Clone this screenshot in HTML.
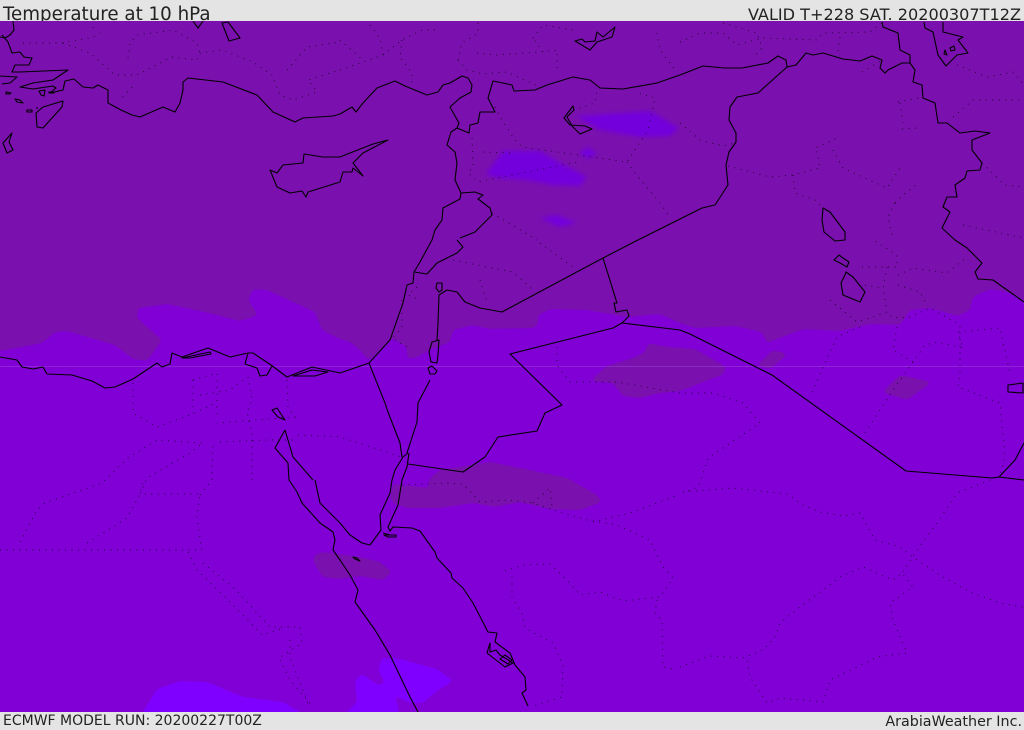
<!DOCTYPE html>
<html><head><meta charset="utf-8"><title>Temperature at 10 hPa</title>
<style>
html,body{margin:0;padding:0;width:1024px;height:729px;overflow:hidden;background:#e4e4e4}
.t{position:absolute;font-family:"DejaVu Sans","Liberation Sans",sans-serif;color:#222;white-space:nowrap;line-height:1}
#map{position:absolute;left:0;top:21px;width:1024px;height:691px;display:block}
</style></head><body>
<div class="t" style="left:3px;top:6px;font-size:18.25px">Temperature at 10 hPa</div>
<div class="t" style="right:3px;top:7px;font-size:16.1px">VALID T+228 SAT. 20200307T12Z</div>
<div class="t" style="left:3px;top:714px;font-size:14px">ECMWF MODEL RUN: 20200227T00Z</div>
<div class="t" style="right:2px;top:715px;font-size:14.3px">ArabiaWeather Inc.</div>
<svg id="map" viewBox="0 21 1024 691" xmlns="http://www.w3.org/2000/svg">
<defs>
<filter id="s" filterUnits="userSpaceOnUse" x="-60" y="-60" width="1144" height="849" color-interpolation-filters="sRGB">
<feGaussianBlur stdDeviation="2.2"/>
<feComponentTransfer><feFuncA type="linear" slope="14" intercept="-6.5"/></feComponentTransfer>
</filter>
</defs>
<rect x="0" y="21" width="1024" height="691" fill="#8000d6"/>
<g filter="url(#s)">
<polygon fill="#7a10ae" points="-40,352 0,351 42,343 55,332 67,331 115,345 133,359 147,361 162,340 137,318 138,308 167,304 205,312 240,321 258,315 248,300 253,289 267,290 315,312 322,330 340,339 350,342 360,350 369,361 392,338 407,347 407,358 415,358 430,350 450,342 453,330 473,325 490,329 533,328 538,325 538,315 550,309 587,310 627,317 660,314 680,323 695,328 735,326 762,332 767,343 803,329 840,331 870,324 900,325 910,310 930,308 958,316 970,310 973,297 990,289 1007,292 1060,320 1060,-40 -40,-40"/>
<polygon fill="#7a10ae" points="590,381 607,366 633,358 645,352 648,343 668,347 695,349 726,367 724,374 680,391 660,393 640,398 623,396 613,383"/>
<polygon fill="#7a10ae" points="757,365 773,350 788,354 770,369"/>
<polygon fill="#7a10ae" points="882,392 900,375 932,382 907,400"/>
<polygon fill="#7a10ae" points="390,497 393,484 428,488 430,478 440,470 490,462 520,468 567,478 597,495 602,502 580,510 550,509 520,502 495,507 473,503 440,508 407,508 393,503"/>
<polygon fill="#7a10ae" points="314,555 323,552 360,557 380,562 392,572 383,580 360,576 340,579 323,577 314,563"/>
<polygon fill="#7300dc" points="576,116 607,114 650,111 679,128 670,136 640,137 600,130"/>
<polygon fill="#7300dc" points="486,174 503,151 540,151 557,161 587,177 580,186 553,185 527,180 497,178"/>
<polygon fill="#7300dc" points="579,153 588,147 597,154 588,159"/>
<polygon fill="#7300dc" points="540,218 557,215 577,223 560,227"/>
<polygon fill="#7f00ff" points="130,740 143,712 157,689 180,681 207,682 243,697 283,702 305,715 320,740"/>
<polygon fill="#7f00ff" points="330,740 347,712 357,702 355,680 362,674 378,685 385,683 378,670 382,658 400,659 437,669 453,681 437,691 423,703 410,703 395,695 399,712 405,740"/>
</g>
<line x1="0" y1="366.5" x2="1024" y2="366.5" stroke="#a050d8" stroke-opacity=".45" stroke-width="1"/>
<!-- dotted admin borders -->
<g fill="none" stroke="#000" stroke-opacity=".75" stroke-width=".9" stroke-dasharray="1 5.5">
<path d="M0 550H201M20 542L37 510 45 503 102 483 128 458 157 440 203 443 190 453 147 478 140 494H200L197 517 202 552M87 543L127 518 140 494 143 480M200 495L212 480 213 443"/>
<path d="M188 552L197 570 220 592 250 622 262 635 283 628M203 563L233 587 250 605 270 627 300 627 302 643 287 653 279 658 290 680 313 707M290 640V657L308 703"/>
<path d="M133 383V413L157 427 195 413 217 402M193 380V413M193 380L217 373V417M200 395L230 390 243 380M287 380L288 407 295 417 217 423M248 377L252 400 247 412 252 433V480M220 442L267 440 293 440M298 435L340 437 402 457"/>
<path d="M402 485L447 483 463 484 480 502 507 500 533 503 553 510 587 520 617 525 650 540 663 567 673 578 660 597 623 601 600 592 580 595 567 580 550 564 523 565 502 572M512 577V597L522 613 525 628 553 643 563 665 562 697 530 707M533 503L550 488 552 507"/>
<path d="M593 522L633 512 678 495M683 492L733 488 787 494 803 505 820 512 843 516 860 513 875 540 900 547 917 560 943 577 970 592 1000 603 1023 607M990 480L957 493 937 523 917 550 902 573"/>
<path d="M680 667L710 656 743 658 763 650 775 637 780 623 800 607 840 577 863 567 893 580 902 573 913 587 890 603 893 620 907 653 877 657 830 680 823 702 780 698 767 703 750 677 747 660M657 600L655 613 662 620 663 667 677 670"/>
<path d="M830 300L857 322 887 312 893 318 910 317 930 308 960 325V373L958 387 1000 403 1005 457 1000 475M860 327L837 337 825 363 810 397M897 327L893 350 913 362 925 345 937 342 963 348 958 332 1000 328 1010 373M913 362L893 390 865 433"/>
<path d="M685 393H713L743 403 760 423 708 458 702 477 698 487 685 492M862 267H897V255L873 240M898 275L913 268 947 273 967 257M887 267L883 288 887 312M898 285L920 292 927 305M865 285L882 288"/>
<path d="M557 347V365L570 382H617L680 393M453 260L487 267 513 272 533 290M480 280L487 302M540 243L573 267M417 287L408 295 420 300M402 300V328L392 338 407 347"/>
<path d="M495 107L500 117 515 140 522 147 627 162 648 130 655 98 638 93M472 138L473 167 468 173 478 182 547 168 578 162M483 152L513 153M627 162L635 173 660 203 670 217M573 110L595 103 597 90M492 213L537 240"/>
<path d="M340 70L383 55 402 40 422 30 440 30M402 40L400 57 412 73V83M340 40L363 60M458 60L467 70 483 74 507 72 540 87M477 53L497 55 540 52 557 50V68M458 60L462 43 478 33V22M533 38L543 25 573 30M543 52L533 38M657 33L660 50 677 72M370 25L380 38 383 55"/>
<path d="M23 43H63L93 37 100 33M93 27V33M63 43L90 53 107 68 115 75H137L172 57 197 60 200 53 222 50 253 62 272 75 280 95 293 100 317 92 308 80 340 70M128 58L130 43 137 35 173 30 197 43 200 53M287 70L307 47 340 42M132 87L120 100"/>
<path d="M680 42L700 33H723L737 45 762 38 817 40 823 33 870 32 882 23M723 23L757 33 762 48 753 58M840 37L838 52M680 123L700 140 723 146 735 143M728 166L770 177 793 175 820 168 818 157 815 148 837 138M793 175L795 193 815 200 823 208M833 150L843 168 887 188 900 168M895 203L903 195 920 182M895 203L888 217 892 235M898 102L920 98M900 103L903 123M902 129L918 128M953 117L973 100H1024M957 65L987 77 1013 72 1024 85M982 163L1005 185 1024 187M963 225L1024 238M862 72L882 60"/>
</g>
<!-- coastlines and borders -->
<g fill="none" stroke="#000" stroke-width="1.1" stroke-linejoin="round">
<path d="M13 21L14 30 10 35 5 38 0 37M2 35L8 42 12 53 20 52 24 57 32 58 29 65 15 65 12 72 20 72 68 70 53 80 33 83 20 87 33 89 53 86 56 88 50 93 63 90 65 81 74 79 83 87 93 88 98 85 108 90 108 103 121 110 132 115 140 117 163 107 175 112 180 103 183 90 183 82 188 78 223 82 257 95 273 112 295 122 303 118 333 116 340 114 352 107 356 112 363 103 377 88 395 81 405 86 427 95 438 92 443 85 450 83 462 76 468 78 472 85 471 92 460 98 450 107 459 123 457 128 469 133 470 125 478 123 480 112 495 112 488 98 493 81 512 85 514 91 535 90 547 85 573 77 590 80 600 88 623 89 657 83 680 75 703 66 725 68 742 68 768 63 778 56 786 60 787 67 796 65 806 53 813 55 823 53 843 59 860 61 872 56 882 60 880 68 885 73 888 70 902 63 910 63"/>
<path d="M882 22L883 27 898 33 900 50 910 55V63L915 70 913 82 922 85 923 98 935 103 938 123 947 123 960 133 975 131 990 133 972 140V150L982 163 980 170 967 171 965 178 955 185 957 197 947 197 943 207 950 212 942 228 955 240 967 248 982 263 975 272 978 279 993 280 1024 302"/>
<path d="M924 22L925 28 933 32 938 55 946 66 957 55 968 53 958 40 963 37 943 32V22M950 48L954 46 955 50 951 51ZM945 50L947 55 944 54Z"/>
<path d="M787 67L758 93 737 97 730 107 729 120 736 133V142L729 152 726 165 728 185 715 205 702 208 680 219 638 240 603 258 502 312 480 308 465 302 457 292 447 290 439 295 438 323 437 340"/>
<path d="M603 258L617 303 614 303 616 312 627 310 629 316 622 323 613 328 510 354 562 405 545 413 537 431 498 437 485 457 463 472 408 464M622 323L680 330 690 334 772 375 906 471 992 478 999 477 1024 480M999 477L1015 460 1024 443"/>
<path d="M369 363L385 403 388 412 400 443 402 457"/>
<path d="M340 373L369 363 390 340 403 303 407 285 413 283 414 272 427 274 437 263 457 253 463 247 457 240M414 272L420 262 432 240 435 230 442 220 443 208 460 199 461 193 455 180 457 163 455 152 447 145 451 132 457 128M461 193L475 192 483 195 478 199 490 208 492 215 475 232 460 238"/>
<path d="M432 342L439 340 438 355 437 363 431 362 429 352ZM437 283L442 283 442 290 439 292 436 288ZM428 368L432 366 437 371 435 374 430 374ZM430 380L418 403 417 422 407 453"/>
<path d="M408 453L403 457 395 470 392 480 390 493 380 515 381 530 370 545 362 543 350 535 340 523 320 503 315 480M409 453L407 467 402 480 398 505 388 527 390 531 393 527 412 528 420 531 435 552 437 558 451 573 452 578 463 588 473 603 488 632 497 633 495 642 510 653 515 665 525 677 526 690 522 693 528 706"/>
<path d="M490 643L487 653 505 667 513 663 500 655 496 650 490 652ZM500 659L508 664 512 660 505 655ZM383 533L390 535M384 535H396L396 537 388 537Z"/>
<path d="M285 430L275 448 288 463 289 480 297 492 302 503 320 523 333 532 335 540 333 550 340 560 350 575 358 590 355 602 375 630 390 655 410 697 418 712M285 430L293 457 313 480"/>
<path d="M0 357L17 360 22 367 33 369 43 367 47 374 72 375 92 381 105 388 115 387 133 379 157 363 162 367 170 364 172 353 182 357 208 348 230 357 248 353 253 353 271 365 287 377 312 367 340 373M248 353L245 364 257 368 260 376 267 375 272 366M182 358L210 352 211 354 190 358ZM293 376L312 370 328 372 315 376ZM272 410L277 408 285 420 278 417Z"/>
<path d="M270 170L277 187 290 193 302 191 306 197 308 192 340 182 343 172 352 172 353 168 363 176 353 163 363 153 388 140 373 144 350 153 340 157 323 157 304 154 303 163 283 165 277 173Z"/>
<path d="M63 101L62 107 43 128 37 127 36 113 43 107ZM12 133L3 143 7 153 13 150 9 142ZM222 23L228 22 240 38 229 41ZM193 21L198 28 203 21M0 76L17 77 10 83 2 84M39 91L45 90 44 96 41 95ZM49 92H54V93H49ZM6 92L11 93 10 94 6 94ZM15 99L20 100 23 103 17 102ZM27 110H32V112H27ZM36 108H38"/>
<path d="M575 41L582 39 585 42 595 41 597 32 603 37 615 27 612 37 597 42 590 50Z"/>
<path d="M573 106L564 118 570 125 585 126 592 129 580 134 572 126 567 117 574 110Z"/>
<path d="M823 208L830 212 845 232V240L835 241 824 232 822 220ZM839 255L843 258 849 262 847 267 840 263 834 260ZM846 272L853 277 865 292 860 302 843 295 841 283 845 275ZM1008 385L1023 383V393L1008 392Z"/>
<path d="M353 557L357 558 360 561 355 559Z"/>
</g>
</svg>
</body></html>
